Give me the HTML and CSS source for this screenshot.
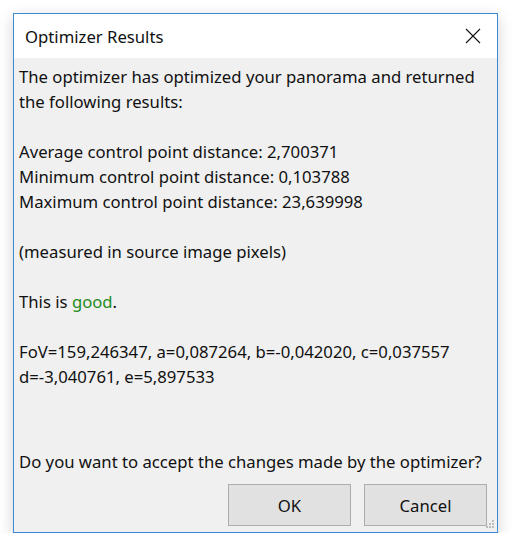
FILE: index.html
```html
<!doctype html>
<html lang="en">
<head>
    <meta charset="utf-8">
    <title>Optimizer Results</title>
    <link rel="stylesheet" href="styles.css">
</head>
<body>
    <div class="window">
        <div class="titlebar">
            <span class="title">Optimizer Results</span>
            <span class="close">
                <svg width="16" height="16" viewBox="0 0 16 16">
                    <path d="M1 1 L15 15 M15 1 L1 15" stroke="#111" stroke-width="1.1" fill="none"/>
                </svg>
            </span>
        </div>
        <div class="content">
            <div class="message">
                <p>The optimizer has optimized your panorama and returned<br>the following results:</p>
                <p>Average control point distance: 2,700371<br>Minimum control point distance: 0,103788<br>Maximum control point distance: 23,639998</p>
                <p>(measured in source image pixels)</p>
                <p>This is <span class="good">good</span>.</p>
                <p>FoV=159,246347, a=0,087264, b=-0,042020, c=0,037557<br>d=-3,040761, e=5,897533</p>
            </div>
            <p class="question">Do you want to accept the changes made by the optimizer?</p>
            <div class="actions">
                <button type="button" class="button">OK</button>
                <button type="button" class="button">Cancel</button>
            </div>
            <div class="grip">
                <svg width="10" height="10" viewBox="0 0 10 10">
                    <rect x="7" y="0" width="2" height="2" fill="#bcbcbc"/>
                    <rect x="4" y="3" width="2" height="2" fill="#bcbcbc"/>
                    <rect x="7" y="3" width="2" height="2" fill="#bcbcbc"/>
                    <rect x="1" y="6" width="2" height="2" fill="#bcbcbc"/>
                    <rect x="4" y="6" width="2" height="2" fill="#bcbcbc"/>
                    <rect x="7" y="6" width="2" height="2" fill="#bcbcbc"/>
                </svg>
            </div>
        </div>
    </div>
</body>
</html>
```

FILE: styles.css
```css
body{
   margin: 0;
   background-color: white;
   font-family: "Noto Sans", "Open Sans", sans-serif;
   font-size: 16.7px;
   color: #111;
}
.window{
   margin: 13px 0 0 13px;
   width: 483px;
   height: 518px;
   border: 1px solid #3a8ad6;
   display: flex;
   flex-direction: column;
   box-shadow: 0 4px 14px rgba(0,0,0,0.18);
}
.titlebar{
   flex-shrink: 0;
   height: 44px;
   background-color: white;
   display: flex;
   align-items: center;
   justify-content: space-between;
   padding: 0 16px 0 11px;
}
.title{
   font-size: 16.7px;
}
.close{
   display: flex;
}
.content{
   flex: 1;
   background-color: #f0f0f0;
   padding: 6px 10px 0 5px;
   position: relative;
}
.message p{
   margin: 0 0 25px 0;
   line-height: 25px;
}
.message p:last-child{
   margin-bottom: 0;
}
.good{
   color: #1e8c1e;
}
.question{
   margin: 60px 0 0 0;
   line-height: 25px;
}
.actions{
   display: flex;
   justify-content: flex-end;
   gap: 13px;
   margin-top: 10px;
}
.button{
   width: 123px;
   height: 42px;
   background-color: #e1e1e1;
   border: 1px solid #adadad;
   font-family: inherit;
   font-size: 16.7px;
   color: #111;
}
.grip{
   position: absolute;
   right: 2px;
   bottom: 2px;
   display: flex;
}
```
